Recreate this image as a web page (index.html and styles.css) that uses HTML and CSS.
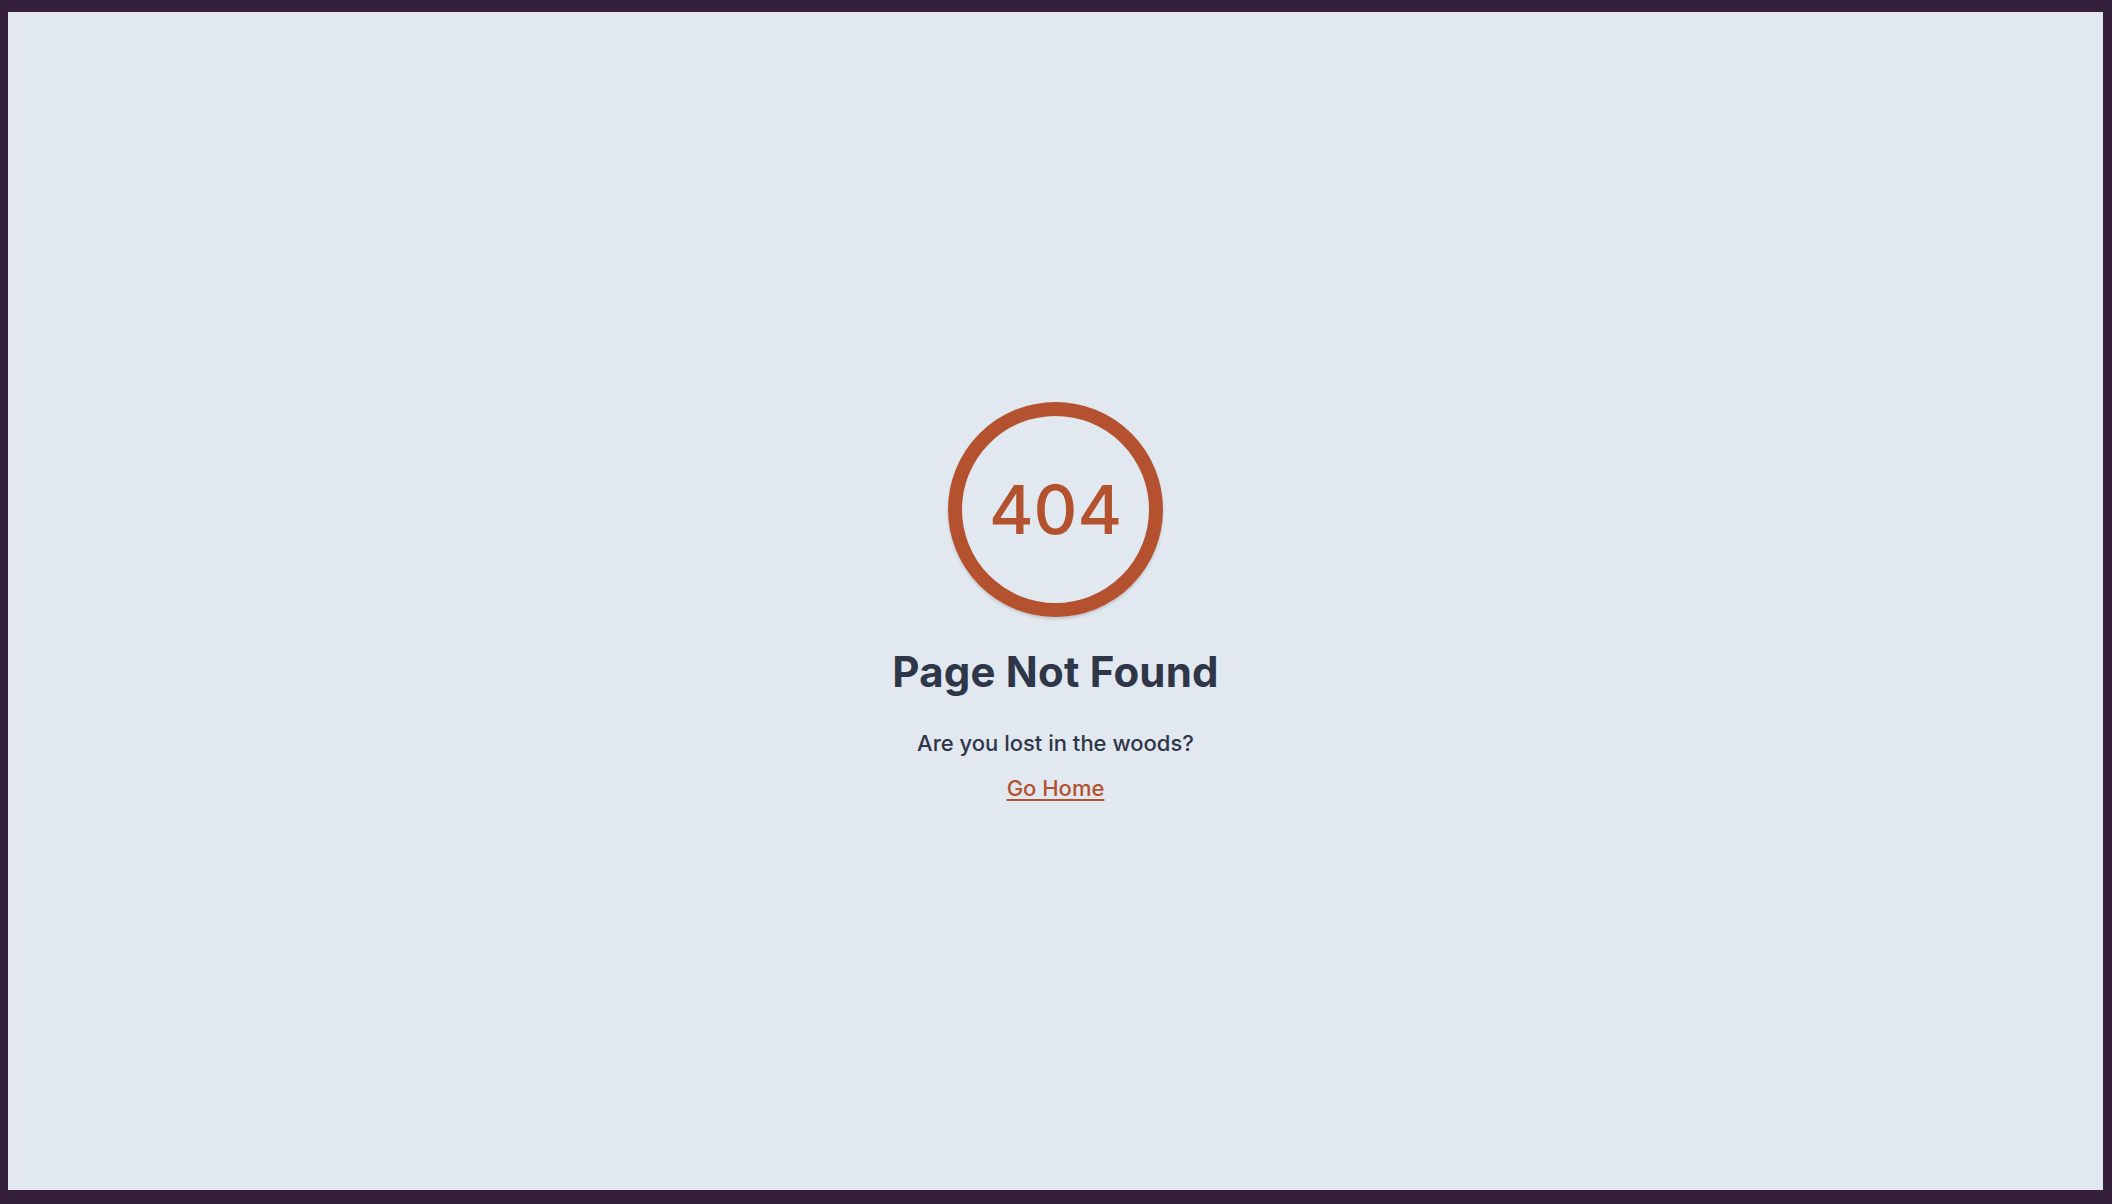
FILE: index.html
```html
<!DOCTYPE html>
<html lang="en">
<head>
<meta charset="utf-8">
<title>Page Not Found</title>
<link rel="stylesheet" href="styles.css">
</head>
<body>
<main class="frame">
  <section class="notfound">
    <div class="badge">404</div>
    <h1 class="title">Page Not Found</h1>
    <p class="subtitle">Are you lost in the woods?</p>
    <a class="home-link" href="#">Go Home</a>
  </section>
</main>
</body>
</html>
```
FILE: styles.css
```css
html, body {
  margin: 0;
  height: 100%;
}
body {
  background: #34203a;
  padding: 12px 9px 14px 8px;
  box-sizing: border-box;
  font-family: Inter, "Noto Sans", "Liberation Sans", sans-serif;
}
.frame {
  height: 100%;
  background: #e2e8f0;
  display: flex;
  align-items: center;
  justify-content: center;
}
.notfound {
  display: flex;
  flex-direction: column;
  align-items: center;
}
.badge {
  width: 215px;
  height: 215px;
  box-sizing: border-box;
  border: 14px solid #b4522f;
  border-radius: 50%;
  display: flex;
  align-items: center;
  justify-content: center;
  color: #b4522f;
  font-size: 68px;
  font-weight: 500;
  box-shadow: 0 2px 3px rgba(0, 0, 0, 0.15);
}
.title {
  margin: 29px 0 0;
  font-size: 42px;
  font-weight: 700;
  letter-spacing: 0.2px;
  line-height: normal;
  color: #2e3648;
}
.subtitle {
  margin: 33px 0 0;
  font-size: 22px;
  font-weight: 500;
  line-height: normal;
  color: #2e3648;
}
.home-link {
  margin-top: 19px;
  font-size: 22px;
  font-weight: 500;
  line-height: normal;
  color: #b4522f;
  text-decoration: underline;
  text-decoration-thickness: 2px;
  text-underline-offset: 3px;
}
```
